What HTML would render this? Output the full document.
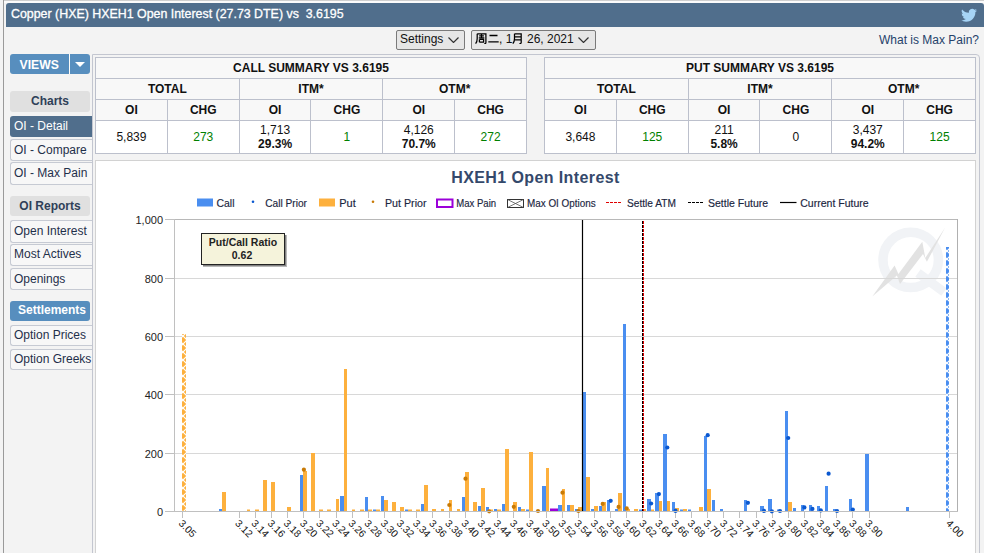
<!DOCTYPE html>
<html><head><meta charset="utf-8"><style>
*{box-sizing:border-box}
html,body{margin:0;padding:0}
body{width:984px;height:553px;overflow:hidden;position:relative;background:#f3f3f3;font-family:"Liberation Sans",sans-serif;color:#111}
.abs{position:absolute}
#topl{position:absolute;left:4px;top:0;width:980px;height:1px;background:#cfcfcf}
#topw{position:absolute;left:4px;top:1px;width:980px;height:2px;background:#fbfbfb}
#leftl{position:absolute;left:3px;top:0;width:1px;height:553px;background:#9a9a9a}
#hdr{position:absolute;left:6px;top:3px;width:978px;height:24px;background:#506e8c;border-radius:3px 3px 0 0}
#hdrt{position:absolute;left:11px;top:7px;font-size:12.4px;color:#fff;-webkit-text-stroke:0.3px #fff;white-space:nowrap;line-height:14px}
.sel{position:absolute;top:30px;height:20px;background:#e6e6e6;border:1px solid #7a7a7a;border-radius:2px;font-size:12px;line-height:18px;color:#111;white-space:nowrap}
#maxp{position:absolute;left:879px;top:33px;font-size:12px;color:#25426a;white-space:nowrap;line-height:14px}
#views{position:absolute;left:10px;top:54px;width:80px;height:20px;background:#578ebe;border-radius:3px}
#views .t{position:absolute;left:9.5px;top:1px;line-height:20px;font-size:12.2px;font-weight:bold;color:#fff}
#views .dv{position:absolute;left:58.5px;top:0;width:1px;height:20px;background:#fcfbf8}
#views .tri{position:absolute;left:65px;top:8px;width:0;height:0;border-left:5px solid transparent;border-right:5px solid transparent;border-top:5px solid #fff}
.nv{position:absolute;left:10px;width:83px;font-size:12px;white-space:nowrap;overflow:hidden}
.nv.hdr{width:80px;background:#e0e0e0;border-radius:3px;text-align:center;font-weight:bold;color:#2f3f58;font-size:12px}
.nv.blu{width:80px;background:#578ebe;border-radius:3px;text-align:center;font-weight:bold;color:#fff;padding-left:4px}
.nv.act{background:#506e8c;color:#fff;border-radius:3px 0 0 3px;padding-left:4px}
.nv.itm{background:#f7f7f7;border:1px solid #c6cad3;border-right:none;border-radius:3px 0 0 3px;color:#1f2f4a;padding-left:3px}
#cont{position:absolute;left:92px;top:54px;width:888px;height:600px;border:1px solid #c3c6d0;border-radius:0 4px 0 0}
table.sum{position:absolute;top:57px;width:432px;height:97px;border-collapse:collapse;background:#f8f8f8;table-layout:fixed}
table.sum td{border:1px solid #bcc0cc;text-align:center;padding:0;font-size:12px}
table.sum td.tt{height:21px;font-weight:bold;color:#111}
table.sum td.hd{height:21px;font-weight:bold;color:#111}
table.sum td.dv{height:33px;background:#fff}
table.sum .two{line-height:13.5px;padding-top:1px}
#chartbox{position:absolute;left:95px;top:160px;width:881px;height:420px;background:#fff;border:1px solid #d2d2d2}
</style></head><body>
<div id="topl"></div><div id="topw"></div>
<div id="leftl"></div>
<div id="hdr"></div>
<div id="hdrt">Copper (HXE) HXEH1 Open Interest (27.73 DTE) vs&nbsp; 3.6195</div>
<svg style="position:absolute;left:961px;top:8px" width="16" height="14" viewBox="0 1.5 24 20"><path fill="#a6d4f6" d="M23.953 4.57a10 10 0 01-2.825.775 4.958 4.958 0 002.163-2.723c-.951.555-2.005.959-3.127 1.184a4.92 4.92 0 00-8.384 4.482C7.69 8.095 4.067 6.13 1.64 3.162a4.822 4.822 0 00-.666 2.475c0 1.71.87 3.213 2.188 4.096a4.904 4.904 0 01-2.228-.616v.06a4.923 4.923 0 003.946 4.827 4.996 4.996 0 01-2.212.085 4.936 4.936 0 004.604 3.417 9.867 9.867 0 01-6.102 2.105c-.39 0-.779-.023-1.17-.067a13.995 13.995 0 007.557 2.209c9.053 0 13.998-7.496 13.998-13.985 0-.21 0-.42-.015-.63A9.935 9.935 0 0024 4.59z"/></svg>
<div class="sel" style="left:396px;width:69px"><span style="position:absolute;left:3px;top:-1px">Settings</span></div>
<svg width="11" height="6" viewBox="0 0 11 6" style="position:absolute;left:448px;top:37px"><path d="M0.5,0.5L5.5,5.5L10.5,0.5" fill="none" stroke="#333" stroke-width="1.2"/></svg>
<div class="sel" style="left:471px;width:125px"><span style="position:absolute;left:27px;top:-1px">, 1</span><span style="position:absolute;left:55px;top:-1px">26, 2021</span></div>
<svg width="12" height="11" viewBox="0 0 12 11" style="position:absolute;left:475px;top:33px"><path d="M2.2,0.8V5.5C2.2,8 1.6,9.6 0.6,10.6M2.2,0.8H10.9V9.8C10.9,10.5 10.5,10.6 9.3,10.5M4.2,2.9H8.9M6.5,1.6V4.8M3.8,4.8H9.3M4.4,6.4V9.3M4.4,6.4H8.6V9H4.4" fill="none" stroke="#000" stroke-width="1.25"/></svg><svg width="11" height="9" viewBox="0 0 11 9" style="position:absolute;left:488px;top:34px"><path d="M1.5,1.5H9.5M0.3,7.8H10.7" fill="none" stroke="#000" stroke-width="1.3"/></svg><svg width="11" height="11" viewBox="0 0 11 11" style="position:absolute;left:512px;top:33px"><path d="M2.5,0.8V5.5C2.5,8 1.9,9.6 0.8,10.6M2.5,0.8H9.2V9.6C9.2,10.4 8.8,10.6 7.4,10.5M2.5,3.9H9.2M2.5,6.9H9.2" fill="none" stroke="#000" stroke-width="1.25"/></svg>
<svg width="11" height="6" viewBox="0 0 11 6" style="position:absolute;left:578px;top:37px"><path d="M0.5,0.5L5.5,5.5L10.5,0.5" fill="none" stroke="#333" stroke-width="1.2"/></svg>
<div id="maxp">What is Max Pain?</div>
<div id="views"><span class="t">VIEWS</span><span class="dv"></span><span class="tri"></span></div>
<div class="nv hdr" style="top:91.0px;height:20.5px;line-height:20.5px">Charts</div>
<div class="nv act" style="top:116.0px;height:21.0px;line-height:21.0px">OI - Detail</div>
<div class="nv itm" style="top:139.0px;height:22.0px;line-height:20.0px">OI - Compare</div>
<div class="nv itm" style="top:162.0px;height:23.0px;line-height:21.0px">OI - Max Pain</div>
<div class="nv hdr" style="top:196.0px;height:20.0px;line-height:20.0px">OI Reports</div>
<div class="nv itm" style="top:220.0px;height:22.5px;line-height:20.5px">Open Interest</div>
<div class="nv itm" style="top:244.0px;height:21.5px;line-height:19.5px">Most Actives</div>
<div class="nv itm" style="top:267.5px;height:22.0px;line-height:20.0px">Openings</div>
<div class="nv blu" style="top:301.0px;height:19.5px;line-height:19.5px">Settlements</div>
<div class="nv itm" style="top:325.0px;height:21.0px;line-height:19.0px">Option Prices</div>
<div class="nv itm" style="top:348.5px;height:21.5px;line-height:19.5px">Option Greeks</div>

<div id="cont"></div>
<table class="sum" style="left:95px">
<tr><td colspan="6" class="tt">CALL SUMMARY VS 3.6195</td></tr>
<tr><td colspan="2" class="hd">TOTAL</td><td colspan="2" class="hd">ITM*</td><td colspan="2" class="hd">OTM*</td></tr>
<tr><td class="hd">OI</td><td class="hd">CHG</td><td class="hd">OI</td><td class="hd">CHG</td><td class="hd">OI</td><td class="hd">CHG</td></tr>
<tr><td class="dv" style="color:#111">5,839</td><td class="dv" style="color:#008000">273</td><td class="dv"><div class="two">1,713<br><b>29.3%</b></div></td><td class="dv" style="color:#008000">1</td><td class="dv"><div class="two">4,126<br><b>70.7%</b></div></td><td class="dv" style="color:#008000">272</td></tr>
</table>
<table class="sum" style="left:544px">
<tr><td colspan="6" class="tt">PUT SUMMARY VS 3.6195</td></tr>
<tr><td colspan="2" class="hd">TOTAL</td><td colspan="2" class="hd">ITM*</td><td colspan="2" class="hd">OTM*</td></tr>
<tr><td class="hd">OI</td><td class="hd">CHG</td><td class="hd">OI</td><td class="hd">CHG</td><td class="hd">OI</td><td class="hd">CHG</td></tr>
<tr><td class="dv" style="color:#111">3,648</td><td class="dv" style="color:#008000">125</td><td class="dv"><div class="two">211<br><b>5.8%</b></div></td><td class="dv" style="color:#111">0</td><td class="dv"><div class="two">3,437<br><b>94.2%</b></div></td><td class="dv" style="color:#008000">125</td></tr>
</table>
<div id="chartbox"></div>
<svg width="984" height="553" viewBox="0 0 984 553" style="position:absolute;left:0;top:0">
<defs>
<pattern id="hp" patternUnits="userSpaceOnUse" x="183" y="0" width="8" height="8"><rect width="8" height="8" fill="#fdb03d"/><path d="M0,0L8,8M8,0L0,8M-4,4L4,-4M4,12L12,4" stroke="#fff" stroke-width="1.2"/></pattern>
<pattern id="hc" patternUnits="userSpaceOnUse" x="947" y="3" width="8" height="8"><rect width="8" height="8" fill="#4a8ef0"/><path d="M0,0L8,8M8,0L0,8M-4,4L4,-4M4,12L12,4" stroke="#fff" stroke-width="1.2"/></pattern>
<pattern id="hx" patternUnits="userSpaceOnUse" x="507" y="199" width="8" height="8"><path d="M0,0L8,8M8,0L0,8" stroke="#555" stroke-width="0.8" fill="none"/></pattern>
</defs>
<circle cx="910.7" cy="259.9" r="27.7" fill="none" stroke="#f1f3f6" stroke-width="9.5"/>
<path d="M918,273 L944,292" stroke="#f1f3f6" stroke-width="9"/>
<polygon points="872.3,296.4 894.6,265.6 898.4,274.1 922.3,241.8 925.3,258.0 945.3,227.2 926.9,261.8 923.0,254.1 900.0,284.1 896.9,275.6" fill="#e2e2e2"/>
<line x1="175" y1="219.5" x2="957" y2="219.5" stroke="#d8d8d8" stroke-width="1"/>
<line x1="165" y1="219.5" x2="175" y2="219.5" stroke="#c0c0c0" stroke-width="1"/>
<text x="163" y="223.5" text-anchor="end" font-family="Liberation Sans" font-size="11" fill="#222">1,000</text>
<line x1="175" y1="278.5" x2="957" y2="278.5" stroke="#d8d8d8" stroke-width="1"/>
<line x1="165" y1="278.5" x2="175" y2="278.5" stroke="#c0c0c0" stroke-width="1"/>
<text x="163" y="282.5" text-anchor="end" font-family="Liberation Sans" font-size="11" fill="#222">800</text>
<line x1="175" y1="336.5" x2="957" y2="336.5" stroke="#d8d8d8" stroke-width="1"/>
<line x1="165" y1="336.5" x2="175" y2="336.5" stroke="#c0c0c0" stroke-width="1"/>
<text x="163" y="340.5" text-anchor="end" font-family="Liberation Sans" font-size="11" fill="#222">600</text>
<line x1="175" y1="394.5" x2="957" y2="394.5" stroke="#d8d8d8" stroke-width="1"/>
<line x1="165" y1="394.5" x2="175" y2="394.5" stroke="#c0c0c0" stroke-width="1"/>
<text x="163" y="398.5" text-anchor="end" font-family="Liberation Sans" font-size="11" fill="#222">400</text>
<line x1="175" y1="453.5" x2="957" y2="453.5" stroke="#d8d8d8" stroke-width="1"/>
<line x1="165" y1="453.5" x2="175" y2="453.5" stroke="#c0c0c0" stroke-width="1"/>
<text x="163" y="457.5" text-anchor="end" font-family="Liberation Sans" font-size="11" fill="#222">200</text>
<line x1="175" y1="511.5" x2="957" y2="511.5" stroke="#d8d8d8" stroke-width="1"/>
<line x1="165" y1="511.5" x2="175" y2="511.5" stroke="#c0c0c0" stroke-width="1"/>
<text x="163" y="515.5" text-anchor="end" font-family="Liberation Sans" font-size="11" fill="#222">0</text>
<line x1="175" y1="219.5" x2="957.5" y2="219.5" stroke="#b8b8b8"/>
<line x1="174.5" y1="219" x2="174.5" y2="512" stroke="#c0c0c0"/>
<line x1="957.5" y1="219" x2="957.5" y2="512" stroke="#b0b0b0"/>
<line x1="165" y1="511.5" x2="958" y2="511.5" stroke="#c0c0c0"/>
<line x1="182.5" y1="512" x2="182.5" y2="518" stroke="#c0c0c0"/>
<text x="178.1" y="524.0" transform="rotate(45 178.1 524.0)" font-family="Liberation Sans" font-size="10.2" fill="#111">3.05</text>
<line x1="239.5" y1="512" x2="239.5" y2="518" stroke="#c0c0c0"/>
<text x="234.6" y="524.0" transform="rotate(45 234.6 524.0)" font-family="Liberation Sans" font-size="10.2" fill="#111">3.12</text>
<line x1="255.5" y1="512" x2="255.5" y2="518" stroke="#c0c0c0"/>
<text x="250.7" y="524.0" transform="rotate(45 250.7 524.0)" font-family="Liberation Sans" font-size="10.2" fill="#111">3.14</text>
<line x1="271.5" y1="512" x2="271.5" y2="518" stroke="#c0c0c0"/>
<text x="266.9" y="524.0" transform="rotate(45 266.9 524.0)" font-family="Liberation Sans" font-size="10.2" fill="#111">3.16</text>
<line x1="287.5" y1="512" x2="287.5" y2="518" stroke="#c0c0c0"/>
<text x="283.1" y="524.0" transform="rotate(45 283.1 524.0)" font-family="Liberation Sans" font-size="10.2" fill="#111">3.18</text>
<line x1="303.5" y1="512" x2="303.5" y2="518" stroke="#c0c0c0"/>
<text x="299.2" y="524.0" transform="rotate(45 299.2 524.0)" font-family="Liberation Sans" font-size="10.2" fill="#111">3.20</text>
<line x1="319.5" y1="512" x2="319.5" y2="518" stroke="#c0c0c0"/>
<text x="315.4" y="524.0" transform="rotate(45 315.4 524.0)" font-family="Liberation Sans" font-size="10.2" fill="#111">3.22</text>
<line x1="336.5" y1="512" x2="336.5" y2="518" stroke="#c0c0c0"/>
<text x="331.5" y="524.0" transform="rotate(45 331.5 524.0)" font-family="Liberation Sans" font-size="10.2" fill="#111">3.24</text>
<line x1="352.5" y1="512" x2="352.5" y2="518" stroke="#c0c0c0"/>
<text x="347.7" y="524.0" transform="rotate(45 347.7 524.0)" font-family="Liberation Sans" font-size="10.2" fill="#111">3.26</text>
<line x1="368.5" y1="512" x2="368.5" y2="518" stroke="#c0c0c0"/>
<text x="363.8" y="524.0" transform="rotate(45 363.8 524.0)" font-family="Liberation Sans" font-size="10.2" fill="#111">3.28</text>
<line x1="384.5" y1="512" x2="384.5" y2="518" stroke="#c0c0c0"/>
<text x="380.0" y="524.0" transform="rotate(45 380.0 524.0)" font-family="Liberation Sans" font-size="10.2" fill="#111">3.30</text>
<line x1="400.5" y1="512" x2="400.5" y2="518" stroke="#c0c0c0"/>
<text x="396.1" y="524.0" transform="rotate(45 396.1 524.0)" font-family="Liberation Sans" font-size="10.2" fill="#111">3.32</text>
<line x1="416.5" y1="512" x2="416.5" y2="518" stroke="#c0c0c0"/>
<text x="412.3" y="524.0" transform="rotate(45 412.3 524.0)" font-family="Liberation Sans" font-size="10.2" fill="#111">3.34</text>
<line x1="432.5" y1="512" x2="432.5" y2="518" stroke="#c0c0c0"/>
<text x="428.4" y="524.0" transform="rotate(45 428.4 524.0)" font-family="Liberation Sans" font-size="10.2" fill="#111">3.36</text>
<line x1="449.5" y1="512" x2="449.5" y2="518" stroke="#c0c0c0"/>
<text x="444.6" y="524.0" transform="rotate(45 444.6 524.0)" font-family="Liberation Sans" font-size="10.2" fill="#111">3.38</text>
<line x1="465.5" y1="512" x2="465.5" y2="518" stroke="#c0c0c0"/>
<text x="460.7" y="524.0" transform="rotate(45 460.7 524.0)" font-family="Liberation Sans" font-size="10.2" fill="#111">3.40</text>
<line x1="481.5" y1="512" x2="481.5" y2="518" stroke="#c0c0c0"/>
<text x="476.9" y="524.0" transform="rotate(45 476.9 524.0)" font-family="Liberation Sans" font-size="10.2" fill="#111">3.42</text>
<line x1="497.5" y1="512" x2="497.5" y2="518" stroke="#c0c0c0"/>
<text x="493.1" y="524.0" transform="rotate(45 493.1 524.0)" font-family="Liberation Sans" font-size="10.2" fill="#111">3.44</text>
<line x1="513.5" y1="512" x2="513.5" y2="518" stroke="#c0c0c0"/>
<text x="509.2" y="524.0" transform="rotate(45 509.2 524.0)" font-family="Liberation Sans" font-size="10.2" fill="#111">3.46</text>
<line x1="529.5" y1="512" x2="529.5" y2="518" stroke="#c0c0c0"/>
<text x="525.4" y="524.0" transform="rotate(45 525.4 524.0)" font-family="Liberation Sans" font-size="10.2" fill="#111">3.48</text>
<line x1="546.5" y1="512" x2="546.5" y2="518" stroke="#c0c0c0"/>
<text x="541.5" y="524.0" transform="rotate(45 541.5 524.0)" font-family="Liberation Sans" font-size="10.2" fill="#111">3.50</text>
<line x1="562.5" y1="512" x2="562.5" y2="518" stroke="#c0c0c0"/>
<text x="557.7" y="524.0" transform="rotate(45 557.7 524.0)" font-family="Liberation Sans" font-size="10.2" fill="#111">3.52</text>
<line x1="578.5" y1="512" x2="578.5" y2="518" stroke="#c0c0c0"/>
<text x="573.8" y="524.0" transform="rotate(45 573.8 524.0)" font-family="Liberation Sans" font-size="10.2" fill="#111">3.54</text>
<line x1="594.5" y1="512" x2="594.5" y2="518" stroke="#c0c0c0"/>
<text x="590.0" y="524.0" transform="rotate(45 590.0 524.0)" font-family="Liberation Sans" font-size="10.2" fill="#111">3.56</text>
<line x1="610.5" y1="512" x2="610.5" y2="518" stroke="#c0c0c0"/>
<text x="606.1" y="524.0" transform="rotate(45 606.1 524.0)" font-family="Liberation Sans" font-size="10.2" fill="#111">3.58</text>
<line x1="626.5" y1="512" x2="626.5" y2="518" stroke="#c0c0c0"/>
<text x="622.3" y="524.0" transform="rotate(45 622.3 524.0)" font-family="Liberation Sans" font-size="10.2" fill="#111">3.60</text>
<line x1="642.5" y1="512" x2="642.5" y2="518" stroke="#c0c0c0"/>
<text x="638.4" y="524.0" transform="rotate(45 638.4 524.0)" font-family="Liberation Sans" font-size="10.2" fill="#111">3.62</text>
<line x1="659.5" y1="512" x2="659.5" y2="518" stroke="#c0c0c0"/>
<text x="654.6" y="524.0" transform="rotate(45 654.6 524.0)" font-family="Liberation Sans" font-size="10.2" fill="#111">3.64</text>
<line x1="675.5" y1="512" x2="675.5" y2="518" stroke="#c0c0c0"/>
<text x="670.7" y="524.0" transform="rotate(45 670.7 524.0)" font-family="Liberation Sans" font-size="10.2" fill="#111">3.66</text>
<line x1="691.5" y1="512" x2="691.5" y2="518" stroke="#c0c0c0"/>
<text x="686.9" y="524.0" transform="rotate(45 686.9 524.0)" font-family="Liberation Sans" font-size="10.2" fill="#111">3.68</text>
<line x1="707.5" y1="512" x2="707.5" y2="518" stroke="#c0c0c0"/>
<text x="703.1" y="524.0" transform="rotate(45 703.1 524.0)" font-family="Liberation Sans" font-size="10.2" fill="#111">3.70</text>
<line x1="723.5" y1="512" x2="723.5" y2="518" stroke="#c0c0c0"/>
<text x="719.2" y="524.0" transform="rotate(45 719.2 524.0)" font-family="Liberation Sans" font-size="10.2" fill="#111">3.72</text>
<line x1="739.5" y1="512" x2="739.5" y2="518" stroke="#c0c0c0"/>
<text x="735.4" y="524.0" transform="rotate(45 735.4 524.0)" font-family="Liberation Sans" font-size="10.2" fill="#111">3.74</text>
<line x1="756.5" y1="512" x2="756.5" y2="518" stroke="#c0c0c0"/>
<text x="751.5" y="524.0" transform="rotate(45 751.5 524.0)" font-family="Liberation Sans" font-size="10.2" fill="#111">3.76</text>
<line x1="772.5" y1="512" x2="772.5" y2="518" stroke="#c0c0c0"/>
<text x="767.7" y="524.0" transform="rotate(45 767.7 524.0)" font-family="Liberation Sans" font-size="10.2" fill="#111">3.78</text>
<line x1="788.5" y1="512" x2="788.5" y2="518" stroke="#c0c0c0"/>
<text x="783.8" y="524.0" transform="rotate(45 783.8 524.0)" font-family="Liberation Sans" font-size="10.2" fill="#111">3.80</text>
<line x1="804.5" y1="512" x2="804.5" y2="518" stroke="#c0c0c0"/>
<text x="800.0" y="524.0" transform="rotate(45 800.0 524.0)" font-family="Liberation Sans" font-size="10.2" fill="#111">3.82</text>
<line x1="820.5" y1="512" x2="820.5" y2="518" stroke="#c0c0c0"/>
<text x="816.1" y="524.0" transform="rotate(45 816.1 524.0)" font-family="Liberation Sans" font-size="10.2" fill="#111">3.84</text>
<line x1="836.5" y1="512" x2="836.5" y2="518" stroke="#c0c0c0"/>
<text x="832.3" y="524.0" transform="rotate(45 832.3 524.0)" font-family="Liberation Sans" font-size="10.2" fill="#111">3.86</text>
<line x1="852.5" y1="512" x2="852.5" y2="518" stroke="#c0c0c0"/>
<text x="848.4" y="524.0" transform="rotate(45 848.4 524.0)" font-family="Liberation Sans" font-size="10.2" fill="#111">3.88</text>
<line x1="869.5" y1="512" x2="869.5" y2="518" stroke="#c0c0c0"/>
<text x="864.6" y="524.0" transform="rotate(45 864.6 524.0)" font-family="Liberation Sans" font-size="10.2" fill="#111">3.90</text>
<line x1="949.5" y1="512" x2="949.5" y2="518" stroke="#c0c0c0"/>
<text x="945.4" y="524.0" transform="rotate(45 945.4 524.0)" font-family="Liberation Sans" font-size="10.2" fill="#111">4.00</text>
<rect x="219" y="509.0" width="3" height="2.5" fill="#4a8ef0"/>
<rect x="300" y="475.0" width="3" height="36.5" fill="#4a8ef0"/>
<rect x="340" y="496.0" width="4" height="15.5" fill="#4a8ef0"/>
<rect x="365" y="497.0" width="3" height="14.5" fill="#4a8ef0"/>
<rect x="373" y="509.5" width="3" height="2.0" fill="#4a8ef0"/>
<rect x="381" y="496.0" width="3" height="15.5" fill="#4a8ef0"/>
<rect x="405" y="509.5" width="3" height="2.0" fill="#4a8ef0"/>
<rect x="421" y="504.0" width="3" height="7.5" fill="#4a8ef0"/>
<rect x="462" y="497.0" width="3" height="14.5" fill="#4a8ef0"/>
<rect x="478" y="506.0" width="3" height="5.5" fill="#4a8ef0"/>
<rect x="486" y="507.0" width="3" height="4.5" fill="#4a8ef0"/>
<rect x="494" y="509.0" width="3" height="2.5" fill="#4a8ef0"/>
<rect x="502" y="504.0" width="3" height="7.5" fill="#4a8ef0"/>
<rect x="518" y="507.0" width="3" height="4.5" fill="#4a8ef0"/>
<rect x="526" y="509.5" width="3" height="2.0" fill="#4a8ef0"/>
<rect x="542" y="486.0" width="4" height="25.5" fill="#4a8ef0"/>
<rect x="558" y="505.0" width="4" height="6.5" fill="#4a8ef0"/>
<rect x="567" y="505.0" width="3" height="6.5" fill="#4a8ef0"/>
<rect x="575" y="509.0" width="3" height="2.5" fill="#4a8ef0"/>
<rect x="583" y="392.0" width="3" height="119.5" fill="#4a8ef0"/>
<rect x="591" y="509.0" width="3" height="2.5" fill="#4a8ef0"/>
<rect x="599" y="506.0" width="3" height="5.5" fill="#4a8ef0"/>
<rect x="607" y="500.0" width="3" height="11.5" fill="#4a8ef0"/>
<rect x="615" y="509.0" width="3" height="2.5" fill="#4a8ef0"/>
<rect x="623" y="324.0" width="3" height="187.5" fill="#4a8ef0"/>
<rect x="639" y="509.5" width="3" height="2.0" fill="#4a8ef0"/>
<rect x="647" y="499.0" width="4" height="12.5" fill="#4a8ef0"/>
<rect x="655" y="493.0" width="4" height="18.5" fill="#4a8ef0"/>
<rect x="663" y="434.0" width="4" height="77.5" fill="#4a8ef0"/>
<rect x="672" y="502.0" width="3" height="9.5" fill="#4a8ef0"/>
<rect x="680" y="509.5" width="3" height="2.0" fill="#4a8ef0"/>
<rect x="688" y="509.5" width="3" height="2.0" fill="#4a8ef0"/>
<rect x="704" y="436.0" width="3" height="75.5" fill="#4a8ef0"/>
<rect x="712" y="500.0" width="3" height="11.5" fill="#4a8ef0"/>
<rect x="720" y="509.0" width="3" height="2.5" fill="#4a8ef0"/>
<rect x="744" y="500.0" width="3" height="11.5" fill="#4a8ef0"/>
<rect x="760" y="506.0" width="4" height="5.5" fill="#4a8ef0"/>
<rect x="768" y="499.0" width="4" height="12.5" fill="#4a8ef0"/>
<rect x="777" y="509.5" width="3" height="2.0" fill="#4a8ef0"/>
<rect x="785" y="411.0" width="3" height="100.5" fill="#4a8ef0"/>
<rect x="793" y="508.0" width="3" height="3.5" fill="#4a8ef0"/>
<rect x="801" y="505.0" width="3" height="6.5" fill="#4a8ef0"/>
<rect x="809" y="505.0" width="3" height="6.5" fill="#4a8ef0"/>
<rect x="817" y="506.0" width="3" height="5.5" fill="#4a8ef0"/>
<rect x="825" y="486.0" width="3" height="25.5" fill="#4a8ef0"/>
<rect x="833" y="509.0" width="3" height="2.5" fill="#4a8ef0"/>
<rect x="849" y="499.0" width="3" height="12.5" fill="#4a8ef0"/>
<rect x="865" y="454.0" width="4" height="57.5" fill="#4a8ef0"/>
<rect x="906" y="507.0" width="3" height="4.5" fill="#4a8ef0"/>
<rect x="946" y="247" width="3" height="264" fill="url(#hc)"/>
<rect x="222" y="492.0" width="4" height="19.5" fill="#fdb03d"/>
<rect x="247" y="509.5" width="3" height="2.0" fill="#fdb03d"/>
<rect x="255" y="509.5" width="4" height="2.0" fill="#fdb03d"/>
<rect x="263" y="480.0" width="4" height="31.5" fill="#fdb03d"/>
<rect x="271" y="482.0" width="4" height="29.5" fill="#fdb03d"/>
<rect x="287" y="507.0" width="4" height="4.5" fill="#fdb03d"/>
<rect x="303" y="471.0" width="4" height="40.5" fill="#fdb03d"/>
<rect x="311" y="453.0" width="4" height="58.5" fill="#fdb03d"/>
<rect x="319" y="509.5" width="4" height="2.0" fill="#fdb03d"/>
<rect x="327" y="509.5" width="4" height="2.0" fill="#fdb03d"/>
<rect x="336" y="499.0" width="3" height="12.5" fill="#fdb03d"/>
<rect x="344" y="369.0" width="3" height="142.5" fill="#fdb03d"/>
<rect x="352" y="509.5" width="3" height="2.0" fill="#fdb03d"/>
<rect x="360" y="509.5" width="4" height="2.0" fill="#fdb03d"/>
<rect x="368" y="509.5" width="4" height="2.0" fill="#fdb03d"/>
<rect x="376" y="509.5" width="4" height="2.0" fill="#fdb03d"/>
<rect x="384" y="500.0" width="4" height="11.5" fill="#fdb03d"/>
<rect x="392" y="502.0" width="4" height="9.5" fill="#fdb03d"/>
<rect x="400" y="507.0" width="4" height="4.5" fill="#fdb03d"/>
<rect x="408" y="509.5" width="4" height="2.0" fill="#fdb03d"/>
<rect x="416" y="509.5" width="4" height="2.0" fill="#fdb03d"/>
<rect x="424" y="485.0" width="4" height="26.5" fill="#fdb03d"/>
<rect x="432" y="509.0" width="4" height="2.5" fill="#fdb03d"/>
<rect x="441" y="509.0" width="3" height="2.5" fill="#fdb03d"/>
<rect x="449" y="500.0" width="3" height="11.5" fill="#fdb03d"/>
<rect x="457" y="509.0" width="3" height="2.5" fill="#fdb03d"/>
<rect x="465" y="472.0" width="4" height="39.5" fill="#fdb03d"/>
<rect x="473" y="502.0" width="4" height="9.5" fill="#fdb03d"/>
<rect x="481" y="488.0" width="4" height="23.5" fill="#fdb03d"/>
<rect x="489" y="509.5" width="4" height="2.0" fill="#fdb03d"/>
<rect x="497" y="509.5" width="4" height="2.0" fill="#fdb03d"/>
<rect x="505" y="449.0" width="4" height="62.5" fill="#fdb03d"/>
<rect x="513" y="502.0" width="4" height="9.5" fill="#fdb03d"/>
<rect x="521" y="509.0" width="4" height="2.5" fill="#fdb03d"/>
<rect x="529" y="452.0" width="4" height="59.5" fill="#fdb03d"/>
<rect x="546" y="468.0" width="3" height="43.5" fill="#fdb03d"/>
<rect x="562" y="489.0" width="3" height="22.5" fill="#fdb03d"/>
<rect x="570" y="505.0" width="4" height="6.5" fill="#fdb03d"/>
<rect x="578" y="507.0" width="4" height="4.5" fill="#fdb03d"/>
<rect x="586" y="477.0" width="4" height="34.5" fill="#fdb03d"/>
<rect x="594" y="506.0" width="4" height="5.5" fill="#fdb03d"/>
<rect x="602" y="502.0" width="4" height="9.5" fill="#fdb03d"/>
<rect x="618" y="493.0" width="4" height="18.5" fill="#fdb03d"/>
<rect x="626" y="509.0" width="4" height="2.5" fill="#fdb03d"/>
<rect x="634" y="509.0" width="4" height="2.5" fill="#fdb03d"/>
<rect x="642" y="509.0" width="4" height="2.5" fill="#fdb03d"/>
<rect x="651" y="509.5" width="3" height="2.0" fill="#fdb03d"/>
<rect x="659" y="501.0" width="3" height="10.5" fill="#fdb03d"/>
<rect x="667" y="501.0" width="3" height="10.5" fill="#fdb03d"/>
<rect x="675" y="508.0" width="4" height="3.5" fill="#fdb03d"/>
<rect x="683" y="509.0" width="4" height="2.5" fill="#fdb03d"/>
<rect x="699" y="507.0" width="4" height="4.5" fill="#fdb03d"/>
<rect x="707" y="489.0" width="4" height="22.5" fill="#fdb03d"/>
<rect x="788" y="502.0" width="4" height="9.5" fill="#fdb03d"/>
<rect x="182" y="334" width="4" height="177" fill="url(#hp)"/>
<rect x="550" y="508.5" width="8" height="2.5" fill="#9b00d9"/>
<line x1="582.5" y1="220" x2="582.5" y2="511" stroke="#000" stroke-width="1.2"/>
<line x1="642.5" y1="221" x2="642.5" y2="511" stroke="#000" stroke-width="1" stroke-dasharray="3,1"/>
<line x1="643.5" y1="221" x2="643.5" y2="511" stroke="#e00000" stroke-width="1" stroke-dasharray="3,1"/>
<circle cx="610.7" cy="500.8" r="2.1" fill="#0a58d0"/>
<circle cx="651.1" cy="503.5" r="2.1" fill="#0a58d0"/>
<circle cx="658.9" cy="494.1" r="2.1" fill="#0a58d0"/>
<circle cx="667.3" cy="447.5" r="2.1" fill="#0a58d0"/>
<circle cx="675.5" cy="510.9" r="2.1" fill="#0a58d0"/>
<circle cx="707.7" cy="435.2" r="2.1" fill="#0a58d0"/>
<circle cx="747.9" cy="502.8" r="2.1" fill="#0a58d0"/>
<circle cx="764.0" cy="510.9" r="2.1" fill="#0a58d0"/>
<circle cx="771.9" cy="511.3" r="2.1" fill="#0a58d0"/>
<circle cx="780.0" cy="511.0" r="2.1" fill="#0a58d0"/>
<circle cx="788.2" cy="438.0" r="2.1" fill="#0a58d0"/>
<circle cx="804.4" cy="507.4" r="2.1" fill="#0a58d0"/>
<circle cx="812.4" cy="508.9" r="2.1" fill="#0a58d0"/>
<circle cx="820.8" cy="510.4" r="2.1" fill="#0a58d0"/>
<circle cx="828.6" cy="473.7" r="2.1" fill="#0a58d0"/>
<circle cx="837.0" cy="511.0" r="2.1" fill="#0a58d0"/>
<circle cx="852.8" cy="509.5" r="2.1" fill="#0a58d0"/>
<circle cx="303.9" cy="469.7" r="2.1" fill="#c87a06"/>
<circle cx="449.3" cy="505.0" r="2.1" fill="#c87a06"/>
<circle cx="465.5" cy="478.7" r="2.1" fill="#c87a06"/>
<circle cx="489.2" cy="511.3" r="2.1" fill="#c87a06"/>
<circle cx="513.8" cy="506.8" r="2.1" fill="#c87a06"/>
<circle cx="538.0" cy="511.0" r="2.1" fill="#c87a06"/>
<circle cx="562.5" cy="492.7" r="2.1" fill="#c87a06"/>
<circle cx="578.4" cy="511.0" r="2.1" fill="#c87a06"/>
<circle cx="602.7" cy="503.9" r="2.1" fill="#c87a06"/>
<circle cx="618.6" cy="506.9" r="2.1" fill="#c87a06"/>
<circle cx="626.7" cy="508.4" r="2.1" fill="#c87a06"/>
<line x1="165" y1="511.5" x2="958" y2="511.5" stroke="#c0c0c0"/>
<text x="535.5" y="182.5" text-anchor="middle" font-family="Liberation Sans" font-weight="bold" font-size="16" letter-spacing="0.4" fill="#34496b">HXEH1 Open Interest</text>
<rect x="197" y="198.5" width="16" height="8" fill="#4a8ef0"/>
<text x="216.5" y="206.5" font-family="Liberation Sans" font-size="10.4" fill="#1a2540" stroke="#1a2540" stroke-width="0.15" textLength="18.0" lengthAdjust="spacingAndGlyphs">Call</text>
<circle cx="253" cy="201.8" r="1.3" fill="#0a58d0"/>
<text x="265.3" y="206.5" font-family="Liberation Sans" font-size="10.4" fill="#1a2540" stroke="#1a2540" stroke-width="0.15" textLength="41.7" lengthAdjust="spacingAndGlyphs">Call Prior</text>
<rect x="319" y="198.5" width="16" height="8" fill="#fdb03d"/>
<text x="339.3" y="206.5" font-family="Liberation Sans" font-size="10.4" fill="#1a2540" stroke="#1a2540" stroke-width="0.15" textLength="16.5" lengthAdjust="spacingAndGlyphs">Put</text>
<circle cx="373" cy="201.8" r="1.3" fill="#c87a06"/>
<text x="385" y="206.5" font-family="Liberation Sans" font-size="10.4" fill="#1a2540" stroke="#1a2540" stroke-width="0.15" textLength="41.5" lengthAdjust="spacingAndGlyphs">Put Prior</text>
<rect x="437" y="199.5" width="15.5" height="7.5" fill="none" stroke="#9b00d9" stroke-width="2"/>
<text x="456.2" y="206.5" font-family="Liberation Sans" font-size="10.4" fill="#1a2540" stroke="#1a2540" stroke-width="0.15" textLength="39.9" lengthAdjust="spacingAndGlyphs">Max Pain</text>
<rect x="507.5" y="199.5" width="16" height="8" fill="none" stroke="#333" stroke-width="1"/><path d="M507.5,199.5L523.5,207.5M523.5,199.5L507.5,207.5" stroke="#555" stroke-width="0.8"/>
<text x="527" y="206.5" font-family="Liberation Sans" font-size="10.4" fill="#1a2540" stroke="#1a2540" stroke-width="0.15" textLength="68.7" lengthAdjust="spacingAndGlyphs">Max OI Options</text>
<line x1="606" y1="202.5" x2="622" y2="202.5" stroke="#e00000" stroke-width="1" stroke-dasharray="3,1"/>
<text x="627" y="206.5" font-family="Liberation Sans" font-size="10.4" fill="#1a2540" stroke="#1a2540" stroke-width="0.15" textLength="48.9" lengthAdjust="spacingAndGlyphs">Settle ATM</text>
<line x1="688" y1="202.5" x2="703" y2="202.5" stroke="#000" stroke-width="1" stroke-dasharray="3,1"/>
<text x="708" y="206.5" font-family="Liberation Sans" font-size="10.4" fill="#1a2540" stroke="#1a2540" stroke-width="0.15" textLength="60.1" lengthAdjust="spacingAndGlyphs">Settle Future</text>
<line x1="780" y1="202.5" x2="796.5" y2="202.5" stroke="#000" stroke-width="1.2"/>
<text x="800.2" y="206.5" font-family="Liberation Sans" font-size="10.4" fill="#1a2540" stroke="#1a2540" stroke-width="0.15" textLength="68.5" lengthAdjust="spacingAndGlyphs">Current Future</text>
<rect x="203" y="235" width="84" height="32" fill="#333" opacity="0.35"/><rect x="203" y="235" width="83" height="31" fill="#333" opacity="0.4"/>
<rect x="201.5" y="233.5" width="83" height="31" fill="#f5f3db" stroke="#222" stroke-width="1"/>
<text x="243" y="246" text-anchor="middle" font-family="Liberation Sans" font-weight="bold" font-size="10.5" fill="#222">Put/Call Ratio</text>
<text x="242" y="259" text-anchor="middle" font-family="Liberation Sans" font-weight="bold" font-size="10.5" fill="#222">0.62</text>
</svg>
</body></html>
